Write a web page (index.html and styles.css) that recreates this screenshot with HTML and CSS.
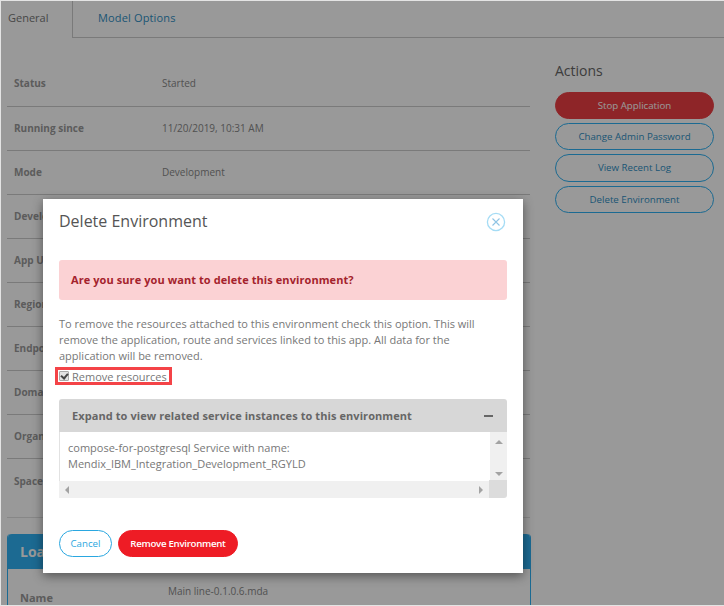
FILE: index.html
```html
<!DOCTYPE html>
<html lang="en">
<head>
    <meta charset="UTF-8">
    <title>Delete Environment</title>
    <link rel="stylesheet" href="styles.css">
</head>
<body>
    <div class="tabs">
        <div class="tab tab-active">General</div>
        <div class="tab tab-link">Model Options</div>
        <div class="tab-rest"></div>
    </div>

    <div class="content">
        <div class="details">
            <div class="row row-first"><span class="label">Status</span><span class="value">Started</span></div>
            <div class="row"><span class="label">Running since</span><span class="value">11/20/2019, 10:31 AM</span></div>
            <div class="row"><span class="label">Mode</span><span class="value">Development</span></div>
            <div class="row"><span class="label">Developer</span></div>
            <div class="row"><span class="label">App URL</span></div>
            <div class="row"><span class="label">Region</span></div>
            <div class="row"><span class="label">Endpoint</span></div>
            <div class="row"><span class="label">Domain</span></div>
            <div class="row"><span class="label">Organization</span></div>
            <div class="row row-tall"><span class="label">Space</span></div>

            <div class="load-box">
                <div class="load-head">Load</div>
                <div class="load-body">
                    <span class="label load-name">Name</span>
                    <span class="value load-file">Main line-0.1.0.6.mda</span>
                </div>
            </div>
        </div>

        <div class="actions">
            <h3>Actions</h3>
            <button class="btn btn-stop">Stop Application</button>
            <button class="btn">Change Admin Password</button>
            <button class="btn btn-tall">View Recent Log</button>
            <button class="btn">Delete Environment</button>
        </div>
    </div>

    <div class="overlay"></div>

    <div class="modal">
        <div class="modal-head">
            <h2>Delete Environment</h2>
            <svg class="close" width="20" height="20" viewBox="0 0 20 20">
                <circle cx="10" cy="10" r="8.6" fill="none" stroke="#a5dcf5" stroke-width="1.3"/>
                <path d="M6.5 6.5l7 7M13.5 6.5l-7 7" fill="none" stroke="#8fc4e4" stroke-width="1.1"/>
            </svg>
        </div>

        <div class="alert">Are you sure you want to delete this environment?</div>

        <p class="info">To remove the resources attached to this environment check this option. This will remove the application, route and services linked to this app. All data for the application will be removed.</p>

        <label class="check"><input type="checkbox" checked>Remove resources</label>

        <div class="accordion">
            <div class="acc-head">
                <span>Expand to view related service instances to this environment</span>
                <span class="acc-minus"></span>
            </div>
            <div class="acc-main">
                <div class="acc-text">compose-for-postgresql Service with name:<br>Mendix_IBM_Integration_Development_RGYLD</div>
                <div class="vbar">
                    <span class="arrow arrow-up"></span>
                    <span class="arrow arrow-down"></span>
                </div>
            </div>
            <div class="hbar">
                <div class="hbar-track">
                    <span class="arrow arrow-left"></span>
                    <span class="arrow arrow-right"></span>
                </div>
                <div class="corner"></div>
            </div>
        </div>

        <div class="modal-foot">
            <button class="foot-btn foot-cancel">Cancel</button>
            <button class="foot-btn foot-remove">Remove Environment</button>
        </div>
    </div>
</body>
</html>
```

FILE: styles.css
```css
/* page behind the dialog */
html {
    background-color: #e4e4e4;
}

body {
    position: relative;
    height: 604px;
    margin: 1px 0 1px 1px;
    overflow: hidden;
    background-color: #fff;
    font-family: "Open Sans", sans-serif;
    font-size: 10px;
    color: #888;
}

.tabs {
    display: flex;
    height: 37px;
}

.tab {
    box-sizing: border-box;
    font-size: 11px;
    line-height: 34px;
}

.tab-active {
    width: 72px;
    padding-left: 7px;
    border-right: 1px solid #ccc;
    color: #777;
}

.tab-link {
    width: 110px;
    padding-left: 25px;
    border-bottom: 1px solid #ccc;
    letter-spacing: 0.15px;
    color: #2f8fc4;
}

.tab-rest {
    flex: 1;
    border-bottom: 1px solid #ccc;
}

.content {
    display: flex;
    align-items: flex-start;
    padding: 24px 9px 0 6px;
}

.details {
    width: 523px;
}

.row {
    box-sizing: border-box;
    display: flex;
    align-items: center;
    height: 44px;
    padding: 0 0 1px 7px;
    border-bottom: 1px solid #ccc;
}

.row-first {
    height: 45px;
    padding-bottom: 3px;
}

.row-tall {
    height: 59px;
    padding-bottom: 15px;
    border-bottom-color: #e2e2e2;
}

.label {
    width: 148px;
    font-weight: 700;
    white-space: nowrap;
    color: #999;
}

.load-box {
    margin: 16px -1px 0 0;
    border-left: 1px solid #2db1f3;
    border-right: 1px solid #2db1f3;
    border-radius: 4px 4px 0 0;
}

.load-head {
    height: 35px;
    padding-left: 12px;
    border-radius: 4px 4px 0 0;
    background-color: #2fb1f3;
    font-size: 14px;
    font-weight: 700;
    line-height: 35px;
    color: #fff;
}

.load-body {
    display: flex;
    height: 40px;
    padding-left: 12px;
}

.load-name {
    width: 148px;
    margin-top: 21px;
    font-size: 11px;
}

.load-file {
    margin-top: 15px;
}

.actions {
    width: 159px;
    margin: -1px 0 0 25px;
}

.actions h3 {
    margin: 0 0 11px;
    font-size: 14px;
    font-weight: 400;
    line-height: 20px;
    color: #666;
}

.btn {
    display: block;
    width: 100%;
    height: 27px;
    margin: 0 0 4px;
    padding: 0 0 1px;
    border: 1px solid #2db1f3;
    border-radius: 14px;
    background-color: #fff;
    font-family: "Open Sans", sans-serif;
    font-size: 9.7px;
    color: #2f8fc4;
}

.btn-tall {
    height: 28px;
}

.btn-stop {
    border-color: #ed3f44;
    background-color: #ed3f44;
    color: #fff;
}

.overlay {
    position: absolute;
    top: 0;
    right: 0;
    bottom: 0;
    left: 0;
    background-color: rgba(0, 0, 0, 0.4);
}

/* dialog */
.modal {
    position: absolute;
    top: 198px;
    left: 42px;
    box-sizing: border-box;
    width: 480px;
    height: 374px;
    padding: 0 16px;
    background-color: #fff;
    box-shadow: 0 3px 10px rgba(0, 0, 0, 0.45);
    color: #777;
}

.modal-head {
    display: flex;
    align-items: center;
    justify-content: space-between;
    height: 46px;
    padding-right: 1px;
}

.modal-head h2 {
    margin: -2px 0 0;
    font-size: 16px;
    font-weight: 400;
    color: #555;
}

.alert {
    height: 40px;
    margin-top: 15px;
    padding-left: 12px;
    border-radius: 3px;
    background-color: #fbd2d4;
    font-size: 11px;
    font-weight: 700;
    line-height: 40px;
    letter-spacing: 0.08px;
    color: #a4232c;
}

.info {
    margin: 16px 0 0;
    font-size: 11px;
    line-height: 16px;
}

.check {
    box-sizing: border-box;
    display: flex;
    align-items: center;
    width: 111px;
    height: 12px;
    margin: 6px 0 0 -1px;
    padding-left: 1px;
    outline: 3px solid #f44347;
    font-size: 11px;
    white-space: nowrap;
}

.check input {
    position: relative;
    box-sizing: border-box;
    width: 10px;
    height: 10px;
    margin: 0 3px 0 0;
    border: 1px solid #aaa;
    border-radius: 1px;
    background-color: #e2e2e2;
    appearance: none;
}

.check input::before {
    content: "";
    position: absolute;
    top: 0;
    left: 2px;
    width: 3px;
    height: 5px;
    border-right: 2px solid #444;
    border-bottom: 2px solid #444;
    transform: rotate(40deg);
}

.accordion {
    margin-top: 17px;
}

.acc-head {
    display: flex;
    align-items: center;
    justify-content: space-between;
    height: 33px;
    padding: 0 14px 0 13px;
    border-radius: 3px 3px 0 0;
    background-color: #d7d7d7;
    font-size: 11px;
    font-weight: 700;
    letter-spacing: 0.08px;
    color: #666;
}

.acc-minus {
    width: 9px;
    height: 2px;
    background-color: #666;
}

.acc-main {
    display: flex;
    height: 49px;
    border-left: 1px solid #e2e2e2;
}

.acc-text {
    flex: 1;
    padding: 8px 0 0 8px;
    font-size: 11px;
    line-height: 16px;
}

.vbar {
    display: flex;
    flex-direction: column;
    align-items: center;
    justify-content: space-between;
    width: 17px;
    padding: 8px 0 5px;
    box-sizing: border-box;
    background-color: #f0f0f0;
}

.hbar {
    display: flex;
    height: 17px;
}

.hbar-track {
    display: flex;
    flex: 1;
    align-items: center;
    justify-content: space-between;
    padding: 0 6px;
    background-color: #f0f0f0;
}

.corner {
    width: 18px;
    margin-top: -1px;
    border-radius: 0 0 3px 0;
    background-color: #dcdcdc;
}

.arrow {
    width: 0;
    height: 0;
    border-style: solid;
    border-color: transparent;
}

.arrow-up {
    border-width: 0 4px 4px;
    border-bottom-color: #a3a3a3;
}

.arrow-down {
    border-width: 4px 4px 0;
    border-top-color: #a3a3a3;
}

.arrow-left {
    border-width: 4px 4px 4px 0;
    border-right-color: #a3a3a3;
}

.arrow-right {
    border-width: 4px 0 4px 4px;
    border-left-color: #a3a3a3;
}

.modal-foot {
    display: flex;
    gap: 6px;
    margin-top: 32px;
}

.foot-btn {
    height: 27px;
    padding: 0;
    border-radius: 14px;
    font-family: "Open Sans", sans-serif;
    font-size: 9.7px;
}

.foot-cancel {
    width: 53px;
    border: 1px solid #2aa7e0;
    background-color: #fff;
    color: #2aa7e0;
}

.foot-remove {
    width: 120px;
    border: 1px solid #ee1c25;
    background-color: #ee1c25;
    font-weight: 600;
    letter-spacing: -0.3px;
    color: #fff;
}
```
